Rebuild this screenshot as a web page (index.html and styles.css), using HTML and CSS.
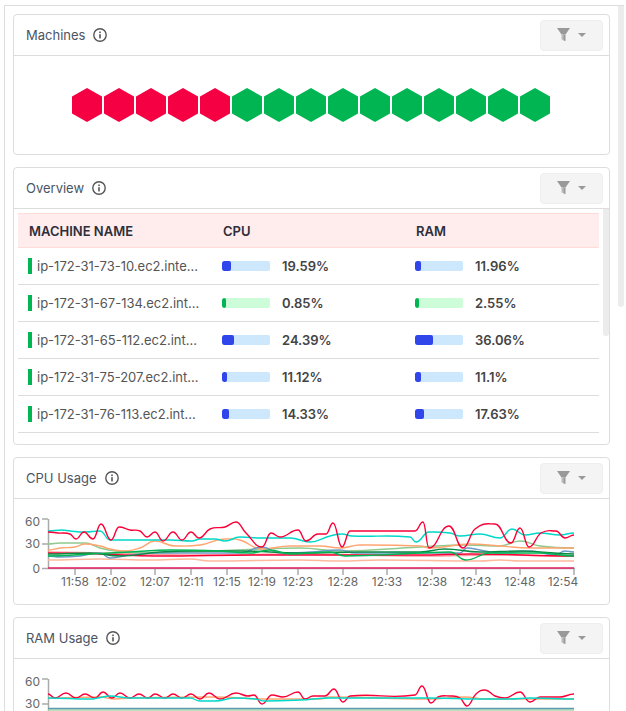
FILE: index.html
```html
<!DOCTYPE html>
<html>
	<head>
		<meta charset="UTF-8" />
		<title>Machines</title>
		<link rel="stylesheet" href="styles.css">
	</head>
	<body>
		<svg class="defs">
			<defs>
				<g id="info-icon">
					<circle cx="7" cy="7" r="6.2" fill="none" stroke="#555" stroke-width="1.4"/>
					<rect x="6.2" y="6.2" width="1.6" height="4.2" fill="#555"/>
					<rect x="6.2" y="3.5" width="1.6" height="1.6" fill="#555"/>
				</g>
				<g id="filter-icon">
					<path d="M0 0H13L8.5 6.5H4.5Z" fill="#999"/>
					<path d="M4.5 6.5H6.3V12L4.5 11.4Z" fill="#bbb"/>
					<path d="M6.3 6.5H8.5V13L6.3 12.4Z" fill="#999"/>
				</g>
			</defs>
		</svg>
		<div class="panel">
			<div class="panel-thumb"></div>
			<div class="panel-inner">
				<div class="card">
					<div class="card-header">
						<span class="card-title">Machines</span>
						<svg class="info" width="14" height="14"><use href="#info-icon"/></svg>
						<button class="filter-btn"><svg width="13" height="14"><use href="#filter-icon"/></svg><span class="caret"></span></button>
					</div>
					<div class="hex-row">
						<span class="hex red"></span><span class="hex red"></span><span class="hex red"></span><span class="hex red"></span><span class="hex red"></span>
						<span class="hex green"></span><span class="hex green"></span><span class="hex green"></span><span class="hex green"></span><span class="hex green"></span>
						<span class="hex green"></span><span class="hex green"></span><span class="hex green"></span><span class="hex green"></span><span class="hex green"></span>
					</div>
				</div>

				<div class="card">
					<div class="card-header">
						<span class="card-title">Overview</span>
						<svg class="info" width="14" height="14"><use href="#info-icon"/></svg>
						<button class="filter-btn"><svg width="13" height="14"><use href="#filter-icon"/></svg><span class="caret"></span></button>
					</div>
					<div class="table-scroll">
						<div class="table-thumb"></div>
						<div class="table">
							<div class="table-head">
								<div class="th-name">MACHINE NAME</div>
								<div class="th-usage">CPU</div>
								<div class="th-usage">RAM</div>
							</div>
							<div class="table-row">
								<div class="name-cell"><span class="status"></span><span class="name">ip-172-31-73-10.ec2.inte...</span></div>
								<div class="usage"><span class="bar"><span class="fill" style="width: 9px"></span></span><b>19.59%</b></div>
								<div class="usage"><span class="bar"><span class="fill" style="width: 6px"></span></span><b>11.96%</b></div>
							</div>
							<div class="table-row">
								<div class="name-cell"><span class="status"></span><span class="name">ip-172-31-67-134.ec2.int...</span></div>
								<div class="usage"><span class="bar low"><span class="fill" style="width: 4px"></span></span><b>0.85%</b></div>
								<div class="usage"><span class="bar low"><span class="fill" style="width: 4px"></span></span><b>2.55%</b></div>
							</div>
							<div class="table-row">
								<div class="name-cell"><span class="status"></span><span class="name">ip-172-31-65-112.ec2.int...</span></div>
								<div class="usage"><span class="bar"><span class="fill" style="width: 12px"></span></span><b>24.39%</b></div>
								<div class="usage"><span class="bar"><span class="fill" style="width: 18px"></span></span><b>36.06%</b></div>
							</div>
							<div class="table-row">
								<div class="name-cell"><span class="status"></span><span class="name">ip-172-31-75-207.ec2.int...</span></div>
								<div class="usage"><span class="bar"><span class="fill" style="width: 5px"></span></span><b>11.12%</b></div>
								<div class="usage"><span class="bar"><span class="fill" style="width: 6px"></span></span><b>11.1%</b></div>
							</div>
							<div class="table-row">
								<div class="name-cell"><span class="status"></span><span class="name">ip-172-31-76-113.ec2.int...</span></div>
								<div class="usage"><span class="bar"><span class="fill" style="width: 7px"></span></span><b>14.33%</b></div>
								<div class="usage"><span class="bar"><span class="fill" style="width: 9px"></span></span><b>17.63%</b></div>
							</div>
						</div>
					</div>
				</div>

				<div class="card">
					<div class="card-header">
						<span class="card-title">CPU Usage</span>
						<svg class="info" width="14" height="14"><use href="#info-icon"/></svg>
						<button class="filter-btn"><svg width="13" height="14"><use href="#filter-icon"/></svg><span class="caret"></span></button>
					</div>
					<svg id="cpu-chart" class="chart cpu-chart" viewBox="14 499 595 105" width="595" height="105">
						<g class="axis">
							<path d="M48.5 519V569M575 568.5H42M42 519H48M42 544H48M75 569v6M111 569v6M155 569v6M191 569v6M227 569v6M262 569v6M298 569v6M343 569v6M387 569v6M432 569v6M476 569v6M520 569v6M574 569v6"/>
						</g>
						<g class="labels">
							<text x="40" y="526" text-anchor="end">60</text>
							<text x="40" y="548" text-anchor="end">30</text>
							<text x="40" y="573" text-anchor="end">0</text>
							<text x="75" y="586" text-anchor="middle">11:58</text>
							<text x="111" y="586" text-anchor="middle">12:02</text>
							<text x="155" y="586" text-anchor="middle">12:07</text>
							<text x="191" y="586" text-anchor="middle">12:11</text>
							<text x="227" y="586" text-anchor="middle">12:15</text>
							<text x="262" y="586" text-anchor="middle">12:19</text>
							<text x="298" y="586" text-anchor="middle">12:23</text>
							<text x="343" y="586" text-anchor="middle">12:28</text>
							<text x="387" y="586" text-anchor="middle">12:33</text>
							<text x="432" y="586" text-anchor="middle">12:38</text>
							<text x="476" y="586" text-anchor="middle">12:43</text>
							<text x="520" y="586" text-anchor="middle">12:48</text>
							<text x="563" y="586" text-anchor="middle">12:54</text>
						</g>
					</svg>
				</div>

				<div class="card">
					<div class="card-header">
						<span class="card-title">RAM Usage</span>
						<svg class="info" width="14" height="14"><use href="#info-icon"/></svg>
						<button class="filter-btn"><svg width="13" height="14"><use href="#filter-icon"/></svg><span class="caret"></span></button>
					</div>
					<svg id="ram-chart" class="chart ram-chart" viewBox="14 659 595 105" width="595" height="105">
						<g class="axis">
							<path d="M48.5 679V729M42 679H48M42 704H48"/>
						</g>
						<g class="labels">
							<text x="40" y="686" text-anchor="end">60</text>
							<text x="40" y="708" text-anchor="end">30</text>
						</g>
					</svg>
				</div>
			</div>
		</div>
		<script src="chart.js"></script>
	</body>
</html>
```

FILE: styles.css
```css
html, body {
	margin: 0;
	height: 100%;
	overflow: hidden;
	background: #fff;
}
body {
	font-family: Inter, 'Noto Sans', sans-serif;
	font-size: 13px;
	color: #555;
}
.defs {
	display: block;
	width: 0;
	height: 0;
}
.panel {
	position: relative;
	box-sizing: border-box;
	width: 620px;
	height: 706px;
	margin: 5px 0 0 4px;
	border-top: 1px solid #ddd;
	border-left: 1px solid #ddd;
	overflow: hidden;
}
.panel-thumb {
	position: absolute;
	top: 0;
	right: 0;
	width: 6px;
	height: 301px;
	background: #ececec;
	border-radius: 0 0 4px 4px;
}
.panel-inner {
	display: flex;
	flex-direction: column;
	gap: 12px;
	padding: 8px 14px 0 8px;
}
.card {
	background: #fff;
	border: 1px solid #ddd;
	border-radius: 4px;
	overflow: hidden;
	flex: none;
}
.card-header {
	display: flex;
	align-items: center;
	height: 40px;
	padding: 0 6px 0 12px;
	border-bottom: 1px solid #ddd;
}
.card-title {
	font-size: 13px;
	color: #4b5563;
}
.info {
	margin-left: 8px;
}
.filter-btn {
	display: flex;
	align-items: center;
	gap: 8px;
	box-sizing: border-box;
	width: 63px;
	height: 31px;
	margin-left: auto;
	padding: 0 0 0 16px;
	background: #f4f4f4;
	border: 1px solid #eee;
	border-radius: 4px;
}
.caret {
	width: 0;
	height: 0;
	border-left: 4px solid transparent;
	border-right: 4px solid transparent;
	border-top: 4px solid #999;
}
.hex-row {
	display: flex;
	justify-content: center;
	align-items: center;
	gap: 2px;
	height: 98px;
	padding-right: 1px;
}
.hex {
	width: 30px;
	height: 34px;
	clip-path: polygon(50% 0, 100% 25%, 100% 75%, 50% 100%, 0 75%, 0 25%);
}
.hex.red {
	background: #f40043;
}
.hex.green {
	background: #00b552;
}
.table-scroll {
	position: relative;
	height: 235px;
	overflow: hidden;
}
.table-thumb {
	position: absolute;
	top: 0;
	right: 0;
	width: 6px;
	height: 127px;
	background: #ececec;
	border-radius: 0 0 4px 4px;
}
.table {
	padding: 4px 10px 0 4px;
}
.table-head, .table-row {
	display: grid;
	grid-template-columns: 204px 193px 1fr;
	align-items: center;
}
.table-head {
	height: 33px;
	background: #ffeded;
	border-top: 1px solid #ffdcd8;
	border-bottom: 1px solid #ffdcd8;
	font-size: 13px;
	font-weight: 600;
	color: #2e2e3a;
}
.th-name {
	padding-left: 11px;
}
.th-usage {
	padding-left: 1px;
}
.table-row {
	height: 36px;
	border-bottom: 1px solid #ddd;
}
.name-cell {
	display: flex;
	align-items: center;
	gap: 5px;
	padding-left: 10px;
}
.status {
	flex: none;
	width: 4px;
	height: 16px;
	background: #00b552;
}
.name {
	white-space: nowrap;
	color: #555;
}
.usage {
	display: flex;
	align-items: center;
	gap: 12px;
}
.usage b {
	font-weight: 600;
	color: #444;
}
.bar {
	display: block;
	width: 48px;
	height: 10px;
	background: #cde8fd;
	border-radius: 2px;
	overflow: hidden;
}
.bar .fill {
	display: block;
	height: 100%;
	background: #3045ea;
	border-radius: 2px;
}
.bar.low {
	background: #ccfdd8;
}
.bar.low .fill {
	background: #00b552;
}
.chart {
	display: block;
}
.axis path {
	fill: none;
	stroke: #aaa;
	stroke-width: 1.5;
}
.labels text {
	font-family: Inter, 'Noto Sans', sans-serif;
	font-size: 12px;
	fill: #666;
}
.series {
	fill: none;
	stroke-width: 1.4;
	stroke-linejoin: round;
}
```

FILE: chart.js
```js
// points are [x, y] in the chart's own coordinates
var cpuSeries = [
	{ color: '#ffb89c', points: [[48,560],[100,559],[150,560],[190,559],[210,561],[300,560],[340,561],[380,560],[480,561],[500,560],[520,561],[574,561]] },
	{ color: '#f9a0a0', points: [[48,552],[100,553],[200,555],[300,554],[420,556],[500,555],[574,556]] },
	{ color: '#8ec98e', points: [[48,544],[60,543],[85,543],[100,548],[115,551],[150,553],[190,552],[260,549],[300,548],[340,551],[420,547],[465,545],[500,546],[520,541],[540,546],[574,548]] },
	{ color: '#ffa570', points: [[48,550],[60,548],[75,547],[85,544],[100,546],[110,549],[125,551],[140,548],[155,541],[175,546],[200,545],[225,539],[240,540],[262,549],[290,546],[320,546],[340,548],[360,545],[420,546],[430,548],[470,544],[500,546],[530,548],[574,548]] },
	{ color: '#6b9ac4', points: [[48,556],[60,557],[80,556],[100,553],[110,558],[130,555],[160,553],[200,553],[240,553],[262,547],[280,553],[310,552],[340,550],[355,553],[460,553],[467,548],[480,550],[500,553],[530,551],[555,555],[565,551],[574,552]] },
	{ color: '#fb0037', points: [[48,553],[100,554],[155,556],[260,555],[345,555],[420,555],[470,554],[574,556]] },
	{ color: '#0b8a45', points: [[48,554],[90,553],[120,556],[160,552],[200,551],[240,551],[300,553],[360,552],[420,552],[445,549],[480,552],[520,551],[574,554]] },
	{ color: '#00b552', points: [[48,556],[90,554],[130,552],[170,550],[220,551],[250,553],[270,550],[290,554],[330,552],[345,556],[420,553],[450,552],[466,560],[490,553],[540,553],[574,556]] },
	{ color: '#00d8c8', points: [[48,531],[62,530],[70,531],[85,532],[100,531],[110,540],[130,540],[170,540],[192,541],[200,539],[215,539],[225,541],[240,537],[262,538],[290,538],[310,542],[330,536],[342,534],[352,536],[410,537],[416,542],[429,532],[450,533],[460,536],[480,534],[500,538],[512,529],[525,535],[540,533],[560,535],[574,533]] },
	{ color: '#fb0037', points: [[48,532],[58,533],[70,534],[76,539],[84,532],[93,539],[101,524],[111,540],[119,527],[130,530],[140,531],[147,537],[155,532],[163,541],[173,532],[182,540],[191,532],[199,538],[210,529],[225,527],[236,522],[246,533],[262,547],[271,533],[280,537],[298,530],[306,541],[318,534],[326,534],[333,523],[342,547],[350,531],[415,531],[423,522],[429,548],[449,526],[463,548],[475,529],[495,524],[511,543],[520,528],[529,547],[541,533],[556,531],[565,538],[574,535]] },
	{ color: '#e91e63', points: [[48,568],[574,568]] }
];

var ramSeries = [
	{ color: '#a5d6a7', points: [[48,710],[574,710]] },
	{ color: '#5b9bb5', points: [[48,708.5],[574,708.5]] },
	{ color: '#ffa570', points: [[48,698],[100,697],[115,699],[130,698],[215,697],[265,699],[320,699],[330,697],[430,699],[465,697],[485,699],[574,699]] },
	{ color: '#fb0037', points: [[48,694],[55,698],[66,693],[76,698],[85,694],[95,698],[103,692],[112,698],[120,693],[130,698],[139,694],[148,698],[155,694],[165,698],[173,694],[182,698],[191,694],[200,699],[209,693],[220,699],[236,693],[248,696],[254,695],[262,704],[272,695],[283,697],[298,692],[305,699],[313,696],[325,696],[334,689],[343,702],[350,696],[415,695],[422,686],[431,703],[438,697],[450,696],[460,698],[467,706],[476,694],[485,690],[495,696],[505,698],[520,692],[530,702],[540,697],[560,697],[574,694]] },
	{ color: '#00d8c8', points: [[48,698],[90,699],[98,698],[110,696],[130,698],[190,698],[200,701],[215,701],[235,698],[255,699],[265,701],[300,700],[330,698],[430,698],[480,699],[510,699],[530,698],[574,699]] }
];

// slope at a point, flat at peaks and troughs so the curve does not overshoot
function slope(pts, i) {
	var prev = pts[i - 1] || pts[i];
	var next = pts[i + 1] || pts[i];
	if ((pts[i][1] - prev[1]) * (next[1] - pts[i][1]) <= 0) return 0;
	return (next[1] - prev[1]) / (next[0] - prev[0]);
}

function smoothPath(pts) {
	var d = 'M' + pts[0][0] + ' ' + pts[0][1];
	for (var i = 0; i < pts.length - 1; i++) {
		var p1 = pts[i];
		var p2 = pts[i + 1];
		var dx = (p2[0] - p1[0]) / 2.2;
		d += 'C' + (p1[0] + dx) + ' ' + (p1[1] + slope(pts, i) * dx) + ' ' + (p2[0] - dx) + ' ' + (p2[1] - slope(pts, i + 1) * dx) + ' ' + p2[0] + ' ' + p2[1];
	}
	return d;
}

function drawChart(id, series) {
	var svg = document.getElementById(id);
	series.forEach(function (s) {
		var path = document.createElementNS('http://www.w3.org/2000/svg', 'path');
		path.setAttribute('class', 'series');
		path.setAttribute('stroke', s.color);
		path.setAttribute('d', smoothPath(s.points));
		svg.appendChild(path);
	});
}

drawChart('cpu-chart', cpuSeries);
drawChart('ram-chart', ramSeries);
```
